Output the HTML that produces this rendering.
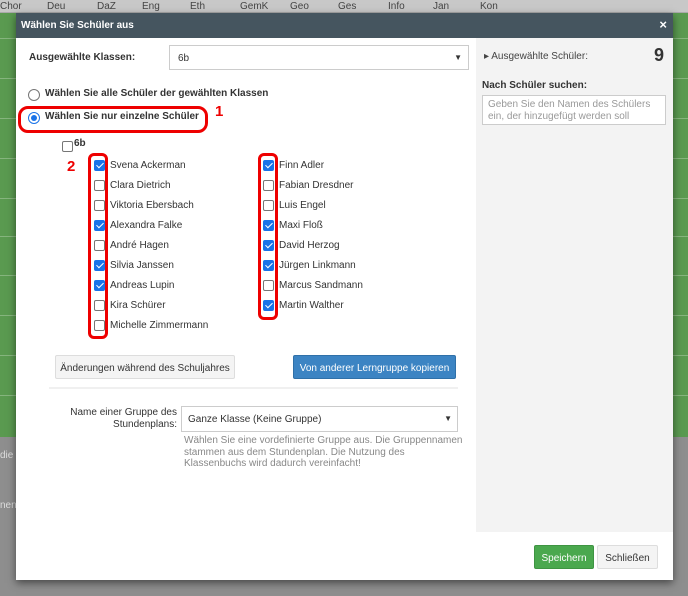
<!DOCTYPE html>
<html><head><meta charset="utf-8"><style>
*{box-sizing:border-box;margin:0;padding:0}
body{width:688px;height:596px;position:relative;overflow:hidden;background:#8e8e8e;font-family:"Liberation Sans",Arial,sans-serif;font-size:10px;color:#333}
.a{position:absolute;white-space:nowrap}
.hdr{left:0;top:0;width:688px;height:13px;background:#c8c8c8;border-bottom:1px solid #aaa}
.hdr span{position:absolute;top:1px;font-size:10px;color:#444}
.green{left:0;top:13px;width:688px;height:424px;background:#5a9a50}
.line{position:absolute;left:0;width:688px;height:1px;background:#86b57e}
.modal{left:16px;top:13px;width:657px;height:567px;background:#fff;box-shadow:0 3px 8px rgba(0,0,0,.5)}
.title{left:0;top:0;width:657px;height:25px;background:#45555f;color:#fff;font-weight:bold;font-size:10px;padding:7px 0 0 5px}
.side{left:460px;top:25px;width:197px;height:494px;background:#f3f3f3}
.cb{position:absolute;width:11px;height:11px;border:1px solid #767676;border-radius:2px;background:#fff}
.cb.on{background:#1a73e8;border-color:#1a73e8}
.cb.on:after{content:"";position:absolute;left:3px;top:0px;width:3px;height:6px;border:solid #fff;border-width:0 1.6px 1.6px 0;transform:rotate(45deg)}
.lbl{position:absolute;font-size:10px;color:#333;white-space:nowrap}
.red{position:absolute;border:3px solid #e00;border-radius:6px}
.btn{position:absolute;font-size:10px;text-align:center;border-radius:2px}
</style></head><body>
<div class="a hdr">
<span style="left:0">Chor</span><span style="left:47px">Deu</span><span style="left:97px">DaZ</span><span style="left:142px">Eng</span><span style="left:190px">Eth</span><span style="left:240px">GemK</span><span style="left:290px">Geo</span><span style="left:338px">Ges</span><span style="left:388px">Info</span><span style="left:433px">Jan</span><span style="left:480px">Kon</span>
</div>
<div class="a green">
<div class="line" style="top:25px"></div><div class="line" style="top:65px"></div><div class="line" style="top:105px"></div><div class="line" style="top:145px"></div><div class="line" style="top:185px"></div><div class="line" style="top:223px"></div><div class="line" style="top:262px"></div><div class="line" style="top:302px"></div><div class="line" style="top:342px"></div><div class="line" style="top:382px"></div>
</div>
<div class="a" style="left:0;top:450px;color:#ddd;font-size:10px">die</div>
<div class="a" style="left:0;top:500px;color:#ddd;font-size:10px">nen</div>
<div class="a modal">
<div class="a title">Wählen Sie Schüler aus<span style="position:absolute;right:6px;top:4px;font-size:13px;font-weight:bold">×</span></div>
<div class="a side">
<div class="a" style="left:8px;top:13px;font-size:10px;color:#444">▸ Ausgewählte Schüler:</div>
<div class="a" style="left:178px;top:7px;font-size:18px;font-weight:bold;color:#333">9</div>
<div class="a" style="left:6px;top:42px;font-size:10px;font-weight:bold">Nach Schüler suchen:</div>
<div class="a" style="left:6px;top:57px;width:184px;height:30px;background:#fff;border:1px solid #ccc;padding:3px 5px;font-size:10px;color:#999;line-height:12px;white-space:normal">Geben Sie den Namen des Schülers ein, der hinzugefügt werden soll</div>
</div>
<div class="a" style="left:13px;top:39px;font-size:10px;font-weight:bold;color:#333">Ausgewählte Klassen:</div>
<div class="a" style="left:153px;top:32px;width:300px;height:25px;border:1px solid #ccc;padding:7px 0 0 8px;font-size:10px">6b<span style="position:absolute;right:6px;top:7px;font-size:8px">▼</span></div>
<div class="a" style="left:12px;top:76px;width:12px;height:12px;border:1px solid #767676;border-radius:50%"></div>
<div class="a" style="left:29px;top:75px;font-size:10px;font-weight:bold;color:#333">Wählen Sie alle Schüler der gewählten Klassen</div>
<div class="a" style="left:12px;top:99px;width:12px;height:12px;border:1px solid #1a73e8;border-radius:50%;background:#fff"><div style="position:absolute;left:2px;top:2px;width:6px;height:6px;border-radius:50%;background:#1a73e8"></div></div>
<div class="a" style="left:29px;top:98px;font-size:10px;font-weight:bold;color:#333">Wählen Sie nur einzelne Schüler</div>
<div class="red" style="left:2px;top:93px;width:190px;height:27px;border-radius:10px"></div>
<div class="a" style="left:199px;top:90px;color:#e00;font-size:15px;font-weight:bold">1</div>
<div class="cb" style="left:46px;top:128px"></div>
<div class="a" style="left:58px;top:125px;font-weight:bold;font-size:10px">6b</div>
<div class="a" style="left:51px;top:145px;color:#e00;font-size:15px;font-weight:bold">2</div>
<div class="red" style="left:72px;top:140px;width:20px;height:186px"></div>
<div class="red" style="left:242px;top:140px;width:20px;height:167px"></div>
<div class="cb on" style="left:78px;top:147px"></div><div class="lbl" style="left:94px;top:147px">Svena Ackerman</div>
<div class="cb" style="left:78px;top:167px"></div><div class="lbl" style="left:94px;top:167px">Clara Dietrich</div>
<div class="cb" style="left:78px;top:187px"></div><div class="lbl" style="left:94px;top:187px">Viktoria Ebersbach</div>
<div class="cb on" style="left:78px;top:207px"></div><div class="lbl" style="left:94px;top:207px">Alexandra Falke</div>
<div class="cb" style="left:78px;top:227px"></div><div class="lbl" style="left:94px;top:227px">André Hagen</div>
<div class="cb on" style="left:78px;top:247px"></div><div class="lbl" style="left:94px;top:247px">Silvia Janssen</div>
<div class="cb on" style="left:78px;top:267px"></div><div class="lbl" style="left:94px;top:267px">Andreas Lupin</div>
<div class="cb" style="left:78px;top:287px"></div><div class="lbl" style="left:94px;top:287px">Kira Schürer</div>
<div class="cb" style="left:78px;top:307px"></div><div class="lbl" style="left:94px;top:307px">Michelle Zimmermann</div>
<div class="cb on" style="left:247px;top:147px"></div><div class="lbl" style="left:263px;top:147px">Finn Adler</div>
<div class="cb" style="left:247px;top:167px"></div><div class="lbl" style="left:263px;top:167px">Fabian Dresdner</div>
<div class="cb" style="left:247px;top:187px"></div><div class="lbl" style="left:263px;top:187px">Luis Engel</div>
<div class="cb on" style="left:247px;top:207px"></div><div class="lbl" style="left:263px;top:207px">Maxi Floß</div>
<div class="cb on" style="left:247px;top:227px"></div><div class="lbl" style="left:263px;top:227px">David Herzog</div>
<div class="cb on" style="left:247px;top:247px"></div><div class="lbl" style="left:263px;top:247px">Jürgen Linkmann</div>
<div class="cb" style="left:247px;top:267px"></div><div class="lbl" style="left:263px;top:267px">Marcus Sandmann</div>
<div class="cb on" style="left:247px;top:287px"></div><div class="lbl" style="left:263px;top:287px">Martin Walther</div>
<div class="btn" style="left:39px;top:342px;width:180px;height:24px;background:#f4f4f4;border:1px solid #ddd;padding-top:7px;color:#333">Änderungen während des Schuljahres</div>
<div class="btn" style="left:277px;top:342px;width:163px;height:24px;background:#3c84c3;border:1px solid #2f70a8;padding-top:7px;color:#fff">Von anderer Lerngruppe kopieren</div>
<div class="a" style="left:33px;top:374px;width:409px;height:2px;background:#f0f0f0"></div>
<div class="a" style="left:25px;top:394px;width:136px;text-align:right;font-size:10px;color:#333;line-height:12px;white-space:normal">Name einer Gruppe des<br>Stundenplans:</div>
<div class="a" style="left:165px;top:393px;width:277px;height:26px;border:1px solid #ccc;padding:7px 0 0 6px;font-size:10px">Ganze Klasse (Keine Gruppe)<span style="position:absolute;right:5px;top:7px;font-size:8px">▼</span></div>
<div class="a" style="left:168px;top:422px;font-size:10px;color:#888;line-height:11.5px;white-space:normal;width:280px">Wählen Sie eine vordefinierte Gruppe aus. Die Gruppennamen stammen aus dem Stundenplan. Die Nutzung des Klassenbuchs wird dadurch vereinfacht!</div>
<div class="btn" style="left:518px;top:532px;width:60px;height:24px;background:#4aa84e;border:1px solid #3e9442;color:#fff;padding-top:7px">Speichern</div>
<div class="btn" style="left:581px;top:532px;width:61px;height:24px;background:#f4f4f4;border:1px solid #ddd;color:#333;padding-top:7px">Schließen</div>
</div>
</body></html>
